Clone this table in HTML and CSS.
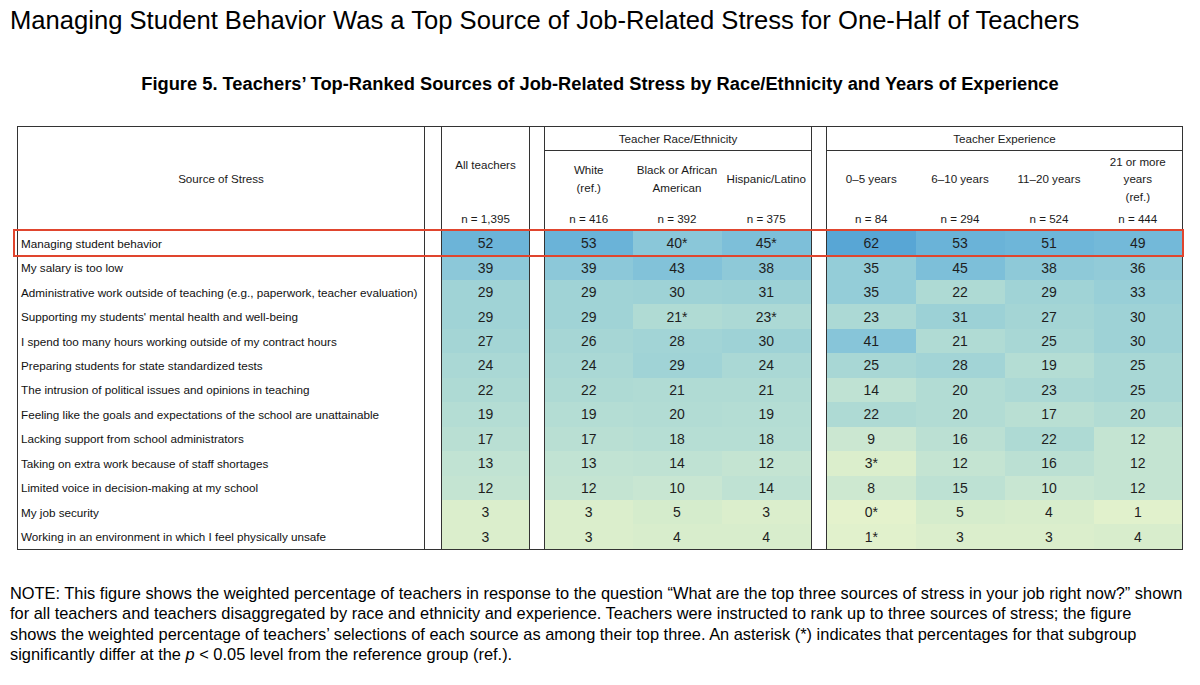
FILE: index.html
```html
<!DOCTYPE html>
<html lang="en">
<head>
<meta charset="utf-8">
<title>Teachers' Top-Ranked Sources of Job-Related Stress</title>
<link rel="stylesheet" href="styles.css">
</head>
<body>
<div class="page">
  <h1 class="title">Managing Student Behavior Was a Top Source of Job-Related Stress for One-Half of Teachers</h1>
  <h2 class="fig">Figure 5. Teachers’ Top-Ranked Sources of Job-Related Stress by Race/Ethnicity and Years of Experience</h2>
  <div class="table-wrap">
    <table class="grid">
      <colgroup>
        <col class="c-lab"><col class="c-sp1"><col class="c-all"><col class="c-sp2">
        <col class="c-w"><col class="c-b"><col class="c-h"><col class="c-sp2">
        <col class="c-e"><col class="c-e"><col class="c-e"><col class="c-e">
      </colgroup>
      <thead>
        <tr class="h1">
          <th rowspan="3" class="lab-h br bb">Source of Stress</th>
          <th rowspan="3" class="sp br bb"></th>
          <th rowspan="2" class="all-h br">All teachers</th>
          <th rowspan="3" class="sp br bb"></th>
          <th colspan="3" class="grp br bb">Teacher Race/Ethnicity</th>
          <th rowspan="3" class="sp br bb"></th>
          <th colspan="4" class="grp bb">Teacher Experience</th>
        </tr>
        <tr class="h2">
          <th>White<br>(ref.)</th>
          <th>Black or African<br>American</th>
          <th class="br">Hispanic/Latino</th>
          <th>0–5 years</th>
          <th>6–10 years</th>
          <th>11–20 years</th>
          <th>21 or more<br>years<br>(ref.)</th>
        </tr>
        <tr class="h3">
          <th class="br bb">n = 1,395</th>
          <th class="bb">n = 416</th>
          <th class="bb">n = 392</th>
          <th class="br bb">n = 375</th>
          <th class="bb">n = 84</th>
          <th class="bb">n = 294</th>
          <th class="bb">n = 524</th>
          <th class="bb">n = 444</th>
        </tr>
      </thead>
      <tbody>
        <tr><td class="lab br">Managing student behavior</td><td class="sp br"></td><td class="v br">52</td><td class="sp br"></td><td class="v">53</td><td class="v">40*</td><td class="v br">45*</td><td class="sp br"></td><td class="v">62</td><td class="v">53</td><td class="v">51</td><td class="v">49</td></tr>
        <tr><td class="lab br">My salary is too low</td><td class="sp br"></td><td class="v br">39</td><td class="sp br"></td><td class="v">39</td><td class="v">43</td><td class="v br">38</td><td class="sp br"></td><td class="v">35</td><td class="v">45</td><td class="v">38</td><td class="v">36</td></tr>
        <tr><td class="lab br">Administrative work outside of teaching (e.g., paperwork, teacher evaluation)</td><td class="sp br"></td><td class="v br">29</td><td class="sp br"></td><td class="v">29</td><td class="v">30</td><td class="v br">31</td><td class="sp br"></td><td class="v">35</td><td class="v">22</td><td class="v">29</td><td class="v">33</td></tr>
        <tr><td class="lab br">Supporting my students' mental health and well-being</td><td class="sp br"></td><td class="v br">29</td><td class="sp br"></td><td class="v">29</td><td class="v">21*</td><td class="v br">23*</td><td class="sp br"></td><td class="v">23</td><td class="v">31</td><td class="v">27</td><td class="v">30</td></tr>
        <tr><td class="lab br">I spend too many hours working outside of my contract hours</td><td class="sp br"></td><td class="v br">27</td><td class="sp br"></td><td class="v">26</td><td class="v">28</td><td class="v br">30</td><td class="sp br"></td><td class="v">41</td><td class="v">21</td><td class="v">25</td><td class="v">30</td></tr>
        <tr><td class="lab br">Preparing students for state standardized tests</td><td class="sp br"></td><td class="v br">24</td><td class="sp br"></td><td class="v">24</td><td class="v">29</td><td class="v br">24</td><td class="sp br"></td><td class="v">25</td><td class="v">28</td><td class="v">19</td><td class="v">25</td></tr>
        <tr><td class="lab br">The intrusion of political issues and opinions in teaching</td><td class="sp br"></td><td class="v br">22</td><td class="sp br"></td><td class="v">22</td><td class="v">21</td><td class="v br">21</td><td class="sp br"></td><td class="v">14</td><td class="v">20</td><td class="v">23</td><td class="v">25</td></tr>
        <tr><td class="lab br">Feeling like the goals and expectations of the school are unattainable</td><td class="sp br"></td><td class="v br">19</td><td class="sp br"></td><td class="v">19</td><td class="v">20</td><td class="v br">19</td><td class="sp br"></td><td class="v">22</td><td class="v">20</td><td class="v">17</td><td class="v">20</td></tr>
        <tr><td class="lab br">Lacking support from school administrators</td><td class="sp br"></td><td class="v br">17</td><td class="sp br"></td><td class="v">17</td><td class="v">18</td><td class="v br">18</td><td class="sp br"></td><td class="v">9</td><td class="v">16</td><td class="v">22</td><td class="v">12</td></tr>
        <tr><td class="lab br">Taking on extra work because of staff shortages</td><td class="sp br"></td><td class="v br">13</td><td class="sp br"></td><td class="v">13</td><td class="v">14</td><td class="v br">12</td><td class="sp br"></td><td class="v">3*</td><td class="v">12</td><td class="v">16</td><td class="v">12</td></tr>
        <tr><td class="lab br">Limited voice in decision-making at my school</td><td class="sp br"></td><td class="v br">12</td><td class="sp br"></td><td class="v">12</td><td class="v">10</td><td class="v br">14</td><td class="sp br"></td><td class="v">8</td><td class="v">15</td><td class="v">10</td><td class="v">12</td></tr>
        <tr><td class="lab br">My job security</td><td class="sp br"></td><td class="v br">3</td><td class="sp br"></td><td class="v">3</td><td class="v">5</td><td class="v br">3</td><td class="sp br"></td><td class="v">0*</td><td class="v">5</td><td class="v">4</td><td class="v">1</td></tr>
        <tr><td class="lab br">Working in an environment in which I feel physically unsafe</td><td class="sp br"></td><td class="v br">3</td><td class="sp br"></td><td class="v">3</td><td class="v">4</td><td class="v br">4</td><td class="sp br"></td><td class="v">1*</td><td class="v">3</td><td class="v">3</td><td class="v">4</td></tr>
      </tbody>
    </table>
    <div class="highlight"></div>
  </div>
  <p class="note">NOTE: This figure shows the weighted percentage of teachers in response to the question “What are the top three sources of stress in your job right now?” shown<br>for all teachers and teachers disaggregated by race and ethnicity and experience. Teachers were instructed to rank up to three sources of stress; the figure<br>shows the weighted percentage of teachers’ selections of each source as among their top three. An asterisk (*) indicates that percentages for that subgroup<br>significantly differ at the <i>p</i> &lt; 0.05 level from the reference group (ref.).</p>
</div>
<script src="script.js"></script>
</body>
</html>
```

FILE: styles.css
```css
html, body {
  margin: 0;
  padding: 0;
  background: #ffffff;
}

body {
  font-family: "Liberation Sans", Arial, sans-serif;
  color: #000;
}

.page {
  width: 1200px;
  height: 685px;
  overflow: hidden;
  padding: 5px 10px 0 10px;
  box-sizing: border-box;
}

.title {
  margin: 0;
  font-size: 25.6px;
  font-weight: normal;
  line-height: 30px;
  color: #000;
  white-space: nowrap;
}

.fig {
  margin: 37px 0 0 0;
  font-size: 18.3px;
  font-weight: bold;
  line-height: 24px;
  text-align: center;
  color: #000;
  white-space: nowrap;
}

.table-wrap {
  position: relative;
  margin: 30px 0 0 7px;
  width: 1166px;
}

.grid {
  border-collapse: collapse;
  table-layout: fixed;
  width: 1166px;
  border: 1px solid #333;
  font-family: "Liberation Sans", Arial, sans-serif;
  color: #222;
}

.c-lab { width: 407px; }
.c-sp1 { width: 17px; }
.c-all { width: 88px; }
.c-sp2 { width: 15px; }
.c-w { width: 88px; }
.c-b { width: 89px; }
.c-h { width: 90px; }
.c-e { width: 89px; }

.grid th {
  font-weight: normal;
  font-size: 11.6px;
  line-height: 17.5px;
  padding: 0;
  text-align: center;
  vertical-align: middle;
  color: #1a1a1a;
  white-space: nowrap;
}

.grid .h1 { height: 24px; }
.grid .h2 { height: 56px; }
.grid .h3 { height: 24px; }

.grid .all-h {
  vertical-align: middle;
  padding-bottom: 4px;
}

.grid td {
  padding: 0;
  height: 24.46px;
  vertical-align: middle;
}

.grid td.lab {
  font-size: 11.7px;
  padding-left: 3px;
  white-space: nowrap;
  color: #111;
}

.grid td.v {
  text-align: center;
  font-size: 14px;
  color: #1e1e1e;
}

.br { border-right: 1px solid #333; }
.bb { border-bottom: 1px solid #333; }

.highlight {
  position: absolute;
  left: -4px;
  top: 103px;
  width: 1167px;
  height: 24px;
  border: 2px solid #e0452e;
  pointer-events: none;
}

.note {
  margin: 33px 0 0 0;
  font-size: 16.4px;
  line-height: 20.5px;
  color: #000;
  white-space: nowrap;
}
```

FILE: script.js
```js
(function () {
  var stops = [
    [0, [228, 242, 204]],
    [5, [213, 236, 204]],
    [10, [200, 230, 210]],
    [20, [178, 220, 212]],
    [30, [158, 210, 214]],
    [40, [138, 199, 217]],
    [50, [112, 183, 217]],
    [62, [88, 166, 213]]
  ];
  function color(v) {
    if (v <= stops[0][0]) return stops[0][1];
    for (var i = 1; i < stops.length; i++) {
      if (v <= stops[i][0]) {
        var a = stops[i - 1], b = stops[i];
        var t = (v - a[0]) / (b[0] - a[0]);
        return a[1].map(function (c, k) { return Math.round(c + (b[1][k] - c) * t); });
      }
    }
    return stops[stops.length - 1][1];
  }
  var cells = document.querySelectorAll('td.v');
  for (var i = 0; i < cells.length; i++) {
    var v = parseInt(cells[i].textContent, 10);
    var c = color(v);
    cells[i].style.backgroundColor = 'rgb(' + c.join(',') + ')';
  }
})();
```
